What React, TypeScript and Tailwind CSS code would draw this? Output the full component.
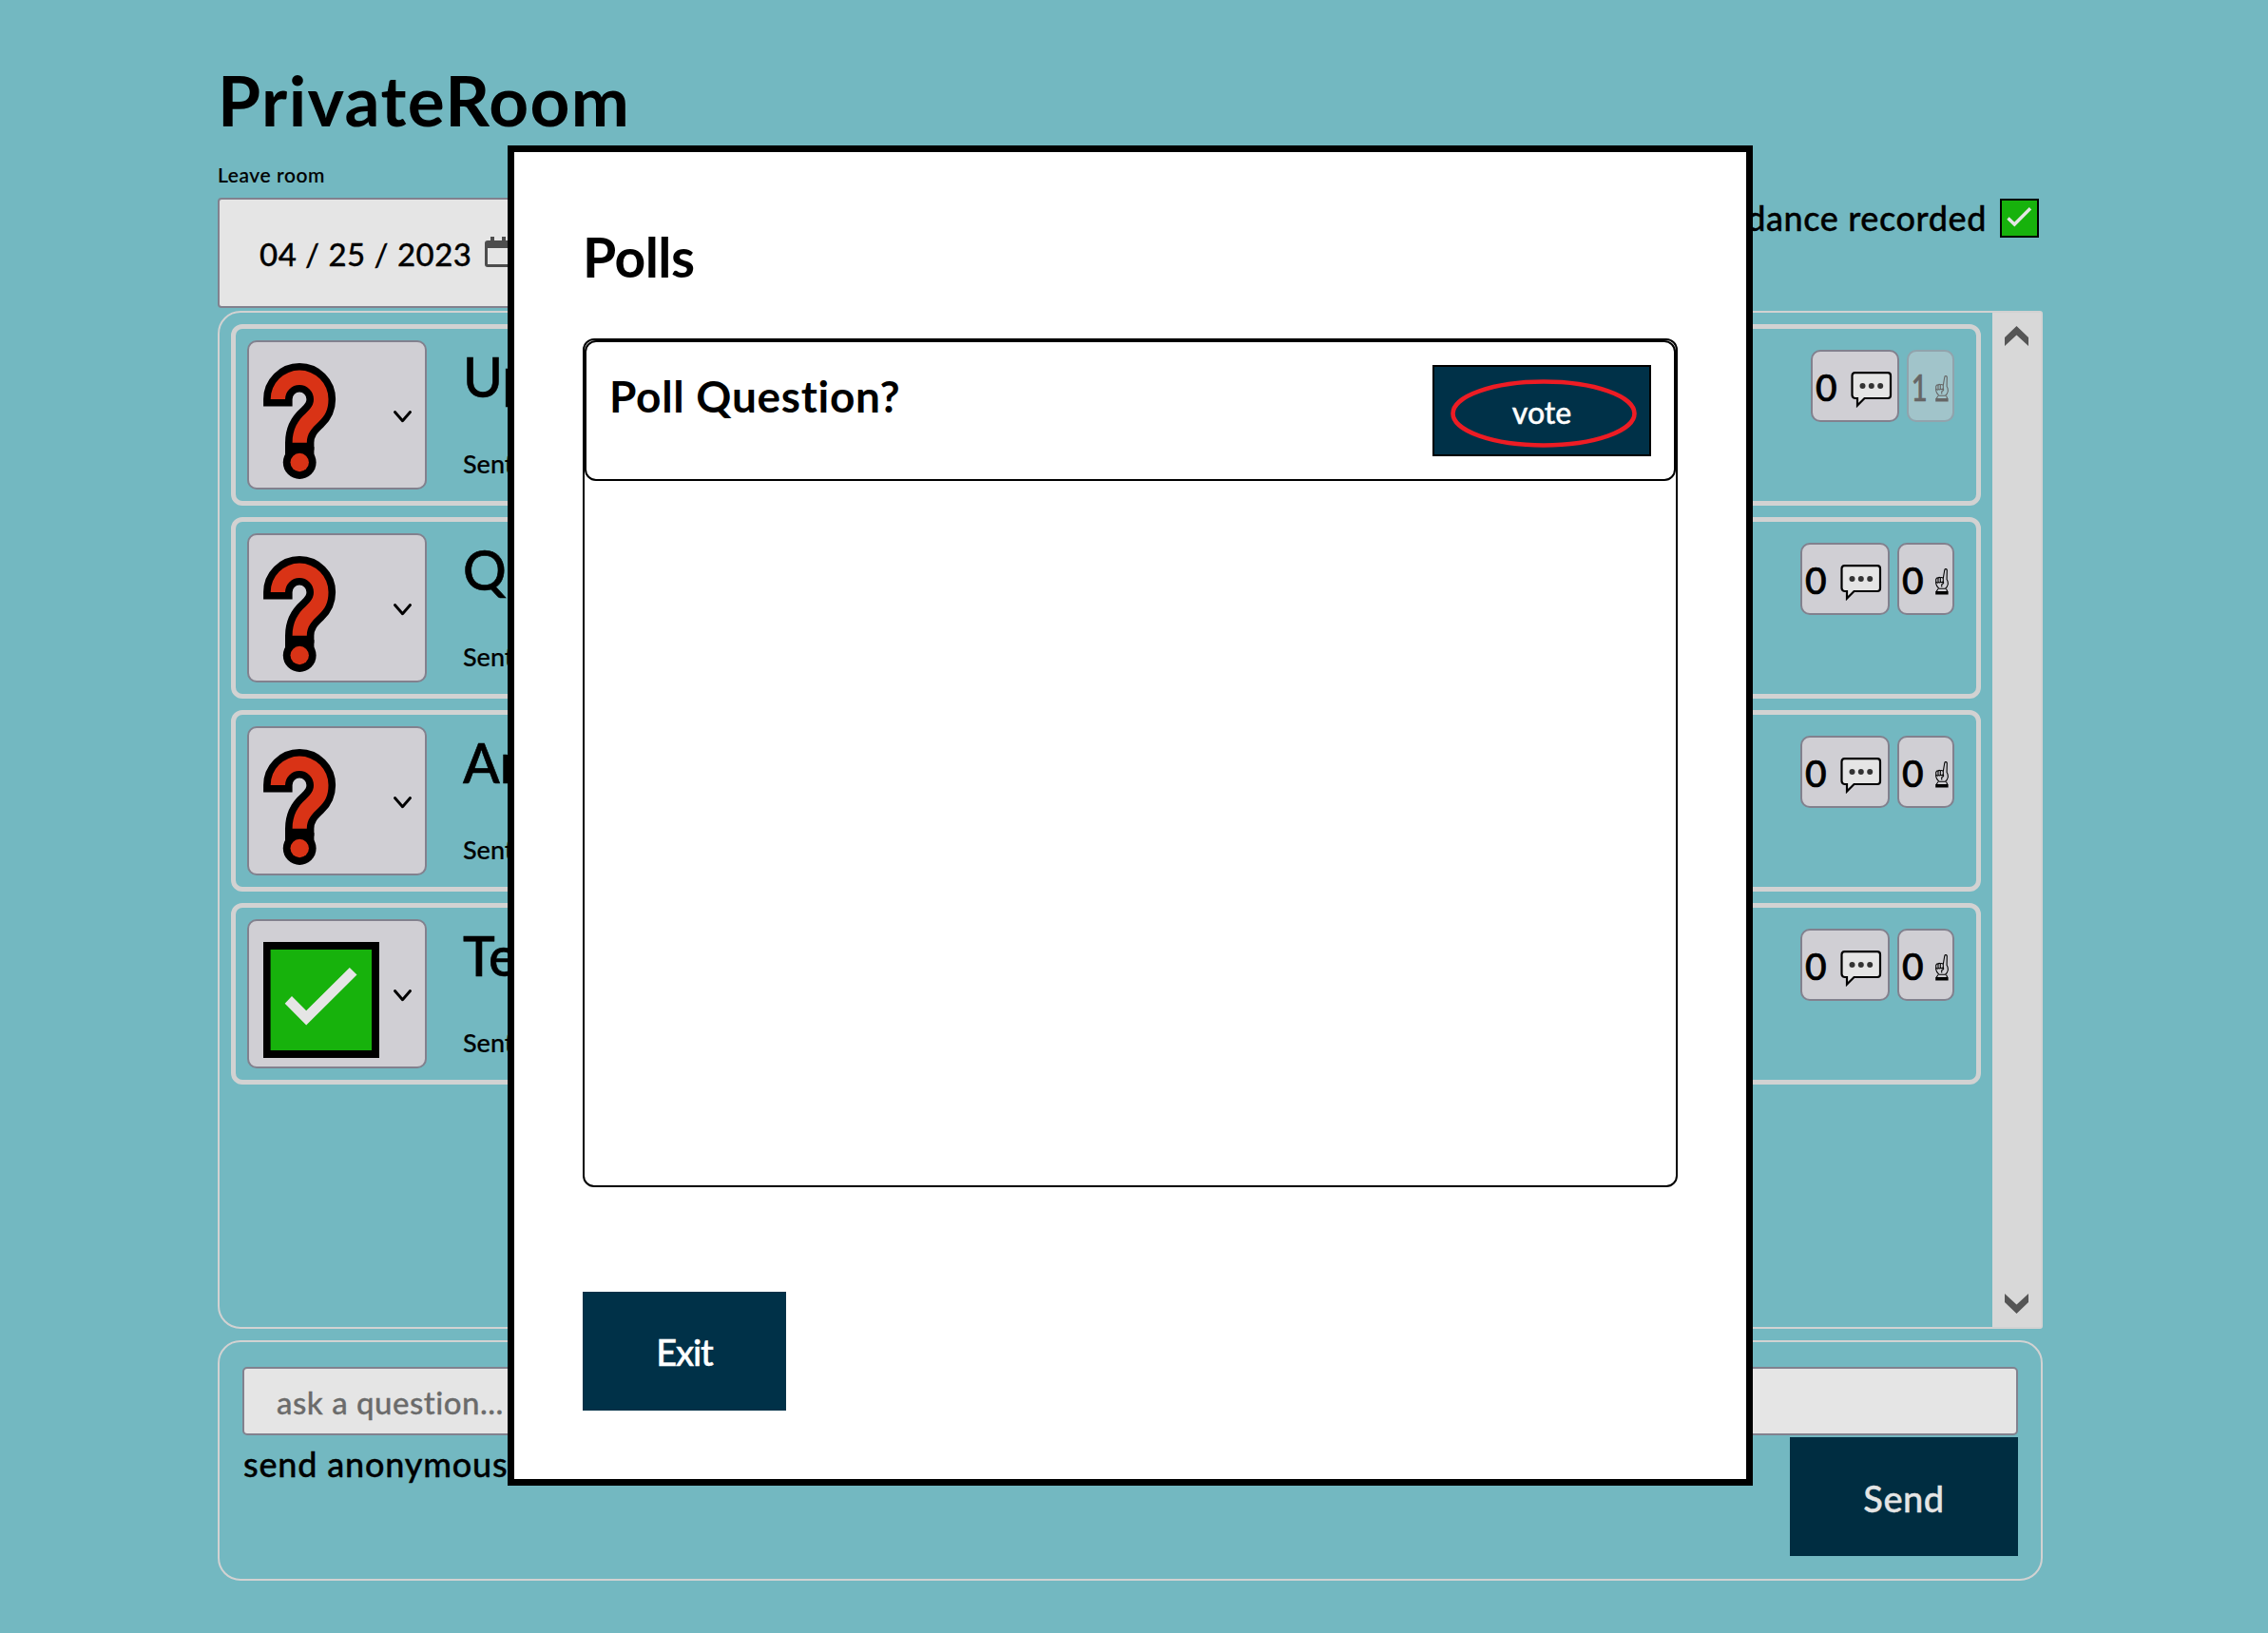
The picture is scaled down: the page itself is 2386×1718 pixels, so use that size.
import React from "react";

function QuestionIcon() {
  return (
    <svg className="h-[122px] w-[122px] shrink-0" viewBox="0 0 122 122">
      <path
        d="M7.7 38A30.4 30.4 0 0 1 68.5 38C68.5 49 65 55.5 58 62C51 68.5 45.8 74 45.8 83.8H30.6C30.6 70 36.5 60 44.5 53C50 47.500 53 44 53 38A15 15 0 0 0 23 38Z"
        fill="#d93316"
        stroke="#000"
        strokeWidth="15.200"
        paintOrder="stroke"
      />
      <path d="M23 88H53.400V97H23Z" />
      <circle cx="38.200" cy="104.500" r="17.400" />
      <circle cx="38.200" cy="104.500" r="9.700" fill="#d93316" />
    </svg>
  );
}

function CheckIcon() {
  return (
    <svg className="h-[122px] w-[122px] shrink-0" viewBox="0 0 122 122">
      <rect width="122" height="122" />
      <rect x="7.600" y="8" width="106.400" height="106" fill="#17b20c" />
      <path d="M30 57L22.700 64.700L45.200 87.500L98.500 34.500L90.800 27L45.200 72.200Z" fill="#e5e5e5" />
    </svg>
  );
}

function SmallCheckIcon() {
  return (
    <svg className="h-[41px] w-[41px] shrink-0" viewBox="0 0 41 41">
      <rect x="1" y="1" width="39" height="39" fill="#17b20c" stroke="#000" strokeWidth="2" />
      <path d="M8.500 20.500L15.300 27L32 10.300" fill="none" stroke="#e5e5e5" strokeWidth="3.400" />
    </svg>
  );
}

function ChatIcon() {
  return (
    <svg className="mt-[8px] h-[39px] w-[44px] shrink-0" viewBox="0 0 44 39">
      <path d="M4.500 1.200H39Q42 1.200 42 4.200V25Q42 28 39 28H14.500L7 35.500V28H4.500Q1.500 27.500 1.500 24.500V4.200Q1.500 1.200 4.500 1.200Z" fill="#e5e5e5" stroke="#000" strokeWidth="2.200" />
      <circle cx="12.500" cy="15" r="3" fill="#333" />
      <circle cx="21.800" cy="15" r="3" fill="#333" />
      <circle cx="31.200" cy="15" r="3" fill="#333" />
    </svg>
  );
}

function HandIcon() {
  return (
    <svg className="mt-[6px] h-[28px] w-[14px] shrink-0" viewBox="0 0 14 28" fill="none" stroke="currentColor" strokeWidth="1.100">
      <path d="M8.300 10.500L9.800 1.500Q10 .6 11 .6T12.300 1.600L12.100 11.500Q13.600 13.500 13.200 17Q12.500 20 10.500 21.300H4Q1 18.500 .7 16V11.500Q1.500 9.500 3 10Q4 8.800 5.300 9.700Q7 9 8.300 10.500V14" />
      <path d="M3 10V14.500M5.300 10V14.500M.7 14Q2 16 3.300 14.300Q4.500 15.500 5.800 14.300Q7 15 8.300 14Q9.500 15.500 7 16.500Q6.500 18 6.800 19.500" />
      <path d="M3 21.500L1 24.500H12.800L11.500 21.500" />
      <path d="M.2 26H13.600" strokeWidth="3" />
    </svg>
  );
}

function Arrow({ down = false }: { down?: boolean }) {
  return (
    <svg className={down ? "h-[21px] w-[25px] rotate-180" : "h-[21px] w-[25px]"} viewBox="0 0 25 21">
      <path d="M12.500 0L25 12V21L12.500 9.500L0 21V12Z" fill="#555" />
    </svg>
  );
}

type Item = { title: string; votes: string; answered?: boolean; voted?: boolean };

const items: Item[] = [
  { title: "Up", votes: "1", voted: true },
  { title: "Q", votes: "0" },
  { title: "Ar", votes: "0" },
  { title: "Te", votes: "0", answered: true },
];

function Card({ item }: { item: Item }) {
  return (
    <div className="flex h-[191px] shrink-0 rounded-[12px] border-[5px] border-[#d2d2d2] pt-3 pr-[23px] pl-3">
      <div className="flex h-[157px] w-[189px] items-start rounded-[10px] border-2 border-[#82818e] bg-[#d0cfd4] pt-[22px] pl-[15px]">
        {item.answered ? <CheckIcon /> : <QuestionIcon />}
        <svg className="mt-[50px] ml-[15px] h-[13px] w-[19px]" viewBox="0 0 19 13" fill="none" stroke="#000" strokeWidth="2.900" strokeLinecap="round" strokeLinejoin="round">
          <path d="M1.500 1.500L9.500 10.700L17.500 1.500" />
        </svg>
      </div>
      <div className="flex flex-1 flex-col pl-[38px]">
        <span className="mt-[8px] text-[57px] leading-[60px] [-webkit-text-stroke:0.6px_black]">{item.title}</span>
        <span className="mt-[45px] text-[27px] leading-[34px] [-webkit-text-stroke:0.2px_black]">Sent</span>
      </div>
      <div className="mt-[10px] flex h-[76px] gap-2">
        <button
          className={
            item.voted
              ? "flex h-[76px] w-[93px] items-center justify-between rounded-[10px] border-2 border-[#82818e] bg-[#d0cfd4] pr-[5px] pl-[3px]"
              : "flex h-[76px] w-[94px] items-center justify-between rounded-[10px] border-2 border-[#82818e] bg-[#d0cfd4] pr-[6px] pl-[3px]"
          }
        >
          <span className="pt-[2px] text-[39px] leading-none [-webkit-text-stroke:0.7px_black]">0</span>
          <ChatIcon />
        </button>
        <button
          className={
            item.voted
              ? "flex h-[76px] w-[50px] items-center justify-between rounded-[10px] border-2 border-[#82818e]/50 bg-[#d0cfd4]/50 pr-1 text-[#666]"
              : "flex h-[76px] w-[60px] items-center justify-between rounded-[10px] border-2 border-[#82818e] bg-[#d0cfd4] pr-1 pl-[3px]"
          }
        >
          <span
            className={
              item.voted
                ? "scale-x-75 pt-[2px] text-[39px] leading-none [-webkit-text-stroke:0.7px_currentColor]"
                : "pt-[2px] text-[39px] leading-none [-webkit-text-stroke:0.7px_currentColor]"
            }
          >
            {item.votes}
          </span>
          <HandIcon />
        </button>
      </div>
    </div>
  );
}

function PollDialog() {
  return (
    <div className="absolute top-[153px] left-[534px] flex h-[1410px] w-[1310px] flex-col border-[7px] border-black bg-white px-[72px]">
      <h2 className="mt-[80px] text-[57px] leading-[60px] font-bold tracking-[-0.5px]">Polls</h2>
      <div className="mt-[56px] h-[893px] w-[1152px] rounded-[12px] border-2 border-black">
        <div className="flex h-[148px] justify-between rounded-[12px] border-2 border-black pt-6 pr-6 pl-[24px]">
          <h3 className="mt-[8px] text-[46px] leading-[50px] font-bold tracking-[0.7px]">Poll Question?</h3>
          <button className="relative h-[96px] w-[230px] border-2 border-black bg-[#003148] pt-[3px] text-[32px] text-white [-webkit-text-stroke:0.4px_white]">
            vote
            <svg className="absolute top-[12px] left-[16px] h-[74px] w-[198px]" viewBox="0 0 198 74">
              <ellipse cx="99" cy="37" rx="95.500" ry="33.500" fill="none" stroke="#ed1c24" strokeWidth="4.600" />
            </svg>
          </button>
        </div>
      </div>
      <button className="mt-[110px] h-[125px] w-[214px] bg-[#003148] pt-[2px] text-[38px] tracking-[-1.2px] text-white [-webkit-text-stroke:0.5px_white]">
        Exit
      </button>
    </div>
  );
}

export default function App() {
  return (
    <div className="relative flex h-[1718px] w-[2386px] flex-col overflow-hidden bg-[#73b8c1] pr-[237px] pl-[229px] font-['Lato',sans-serif] font-medium text-black [font-variant-ligatures:none]">
      <h1 className="mt-[65px] text-[73px] leading-[80px] font-bold tracking-[1.4px]">PrivateRoom</h1>
      <div className="mt-[24px] text-[21px] leading-[30px] tracking-[0.6px] [-webkit-text-stroke:0.2px_black]">Leave room</div>
      <div className="mt-[9px] flex h-[116px] justify-between">
        <div className="flex w-[340px] items-center rounded-[4px] border-2 border-[#82818e] bg-[#e5e5e5] pt-[4px] pl-[42px]">
          <span className="w-[237px] text-[33px] tracking-[0.5px] whitespace-pre [-webkit-text-stroke:0.3px_black]">04 / 25 / 2023</span>
          <svg className="mb-[6px] h-[32px] w-[28px] shrink-0" viewBox="0 0 28 32" fill="#4d4d4d">
            <path d="M3 4H6V0H10V4H18V0H22V4H25Q28 4 28 7V29Q28 32 25 32H3Q0 32 0 29V7Q0 4 3 4ZM3 12V29H25V12Z" />
          </svg>
        </div>
        <div className="flex items-start gap-[14px] pt-px pr-1">
          <span className="text-[36px] leading-[40px] tracking-[0.6px] [-webkit-text-stroke:0.4px_black]">Attendance recorded</span>
          <SmallCheckIcon />
        </div>
      </div>

      <div className="mt-[3px] flex h-[1071px] rounded-l-[24px] rounded-r-[3px] border-2 border-[#d2d2d2]">
        <div className="flex flex-1 flex-col gap-3 p-3">
          {items.map((item) => (
            <Card key={item.title} item={item} />
          ))}
        </div>
        <div className="flex w-[51px] flex-col items-center justify-between bg-[#d8d8d8] pt-[14px] pb-[14px]">
          <Arrow />
          <Arrow down />
        </div>
      </div>

      <div className="mt-3 flex h-[253px] flex-col rounded-[24px] border-2 border-[#d2d2d2] px-6 pt-[26px]">
        <div className="flex h-[72px] items-center rounded-[5px] border-2 border-[#82818e] bg-[#e5e5e5] pl-[34px] text-[33px] text-[#6b6b6b]">
          <span className="mt-[3px] tracking-[0.5px] [-webkit-text-stroke:0.3px_#6b6b6b]">ask a question...</span>
        </div>
        <div className="flex items-start justify-between pt-[2px]">
          <span className="mt-[8px] pl-px text-[36px] leading-[40px] tracking-[0.8px] [-webkit-text-stroke:0.4px_black]">send anonymously</span>
          <button className="h-[125px] w-[240px] bg-[#002d41] pt-[4px] text-[38px] tracking-[0.5px] text-[#e5e5e5] [-webkit-text-stroke:0.4px_#e5e5e5]">
            Send
          </button>
        </div>
      </div>
      <PollDialog />
    </div>
  );
}
